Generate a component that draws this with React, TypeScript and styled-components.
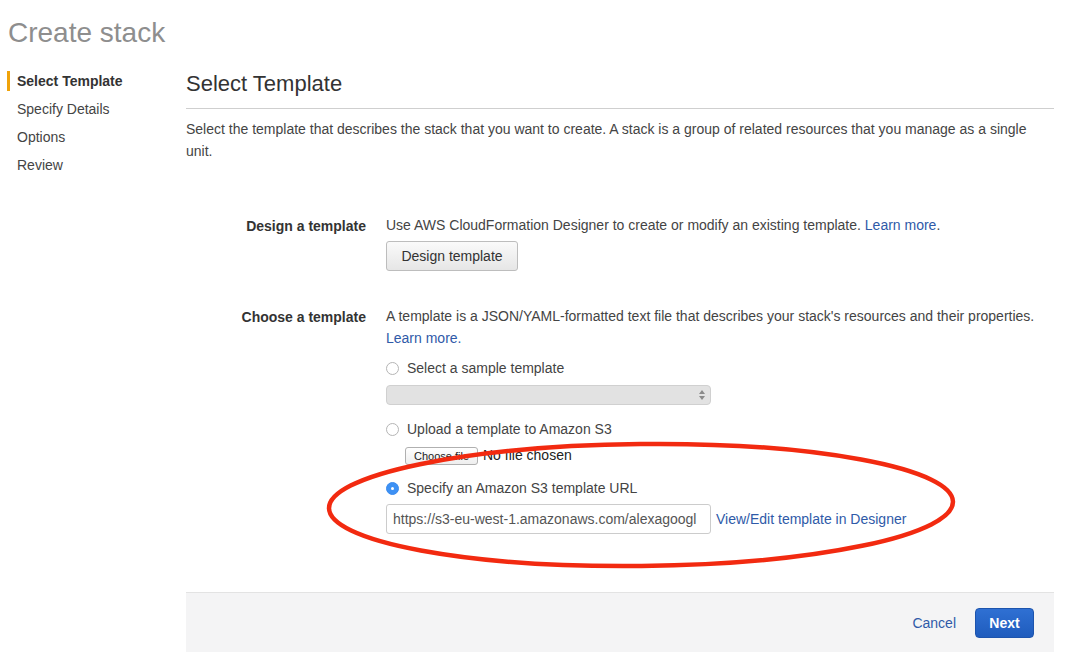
import React from "react";
import styled, { createGlobalStyle } from "styled-components";

const GlobalStyle = createGlobalStyle`
  html, body { margin: 0; padding: 0; background: #ffffff; }
  body { font-family: "Liberation Sans", Arial, Helvetica, sans-serif; color: #444; font-size: 14px; }
  * { box-sizing: border-box; }
`;

const Page = styled.div`
  position: relative;
  width: 1069px;
  height: 658px;
  overflow: hidden;
`;

const PageTitle = styled.h1`
  margin: 0;
  padding: 16px 0 0 8px;
  font-size: 28px;
  line-height: 34px;
  font-weight: 400;
  color: #8e8e8e;
`;

const Layout = styled.div`
  display: grid;
  grid-template-columns: 186px 868px;
`;

const Nav = styled.nav`
  display: flex;
  flex-direction: column;
  gap: 8px;
  padding: 21px 0 0 7px;
`;

const NavItem = styled.div<{ $active?: boolean }>`
  border-left: 3px solid ${(p) => (p.$active ? "#f0a30a" : "transparent")};
  padding-left: 7px;
  line-height: 20px;
  font-size: 14px;
  font-weight: ${(p) => (p.$active ? 700 : 400)};
  color: ${(p) => (p.$active ? "#333" : "#444")};
`;

const Main = styled.main`
  display: flex;
  flex-direction: column;
`;

const Heading = styled.h2`
  margin: 20px 0 0;
  padding-bottom: 10px;
  border-bottom: 1px solid #cfcfcf;
  font-size: 22px;
  line-height: 28px;
  font-weight: 400;
  color: #333;
`;

const Description = styled.p`
  margin: 9px 0 0;
  line-height: 22px;
  color: #444;
`;

const FormRow = styled.div<{ $top: number }>`
  display: grid;
  grid-template-columns: 180px 1fr;
  column-gap: 20px;
  margin-top: ${(p) => p.$top}px;
`;

const Label = styled.div`
  text-align: right;
  font-weight: 700;
  color: #333;
  line-height: 22px;
  padding-top: 1px;
`;

const Field = styled.div`
  display: flex;
  flex-direction: column;
  align-items: flex-start;
`;

const Text = styled.div`
  line-height: 22px;
  color: #444;
`;

const Link = styled.a`
  color: #2f5aa8;
  text-decoration: none;
`;

const Button = styled.button`
  margin-top: 5px;
  height: 30px;
  width: 132px;
  font-family: inherit;
  font-size: 14px;
  color: #333;
  background: linear-gradient(#fafafa, #e6e6e6);
  border: 1px solid #bdbdbd;
  border-radius: 3px;
`;

const RadioRow = styled.label<{ $top: number }>`
  display: flex;
  align-items: center;
  gap: 8px;
  margin-top: ${(p) => p.$top}px;
  line-height: 22px;
  color: #444;
`;

const RadioDot = styled.span<{ $checked?: boolean }>`
  width: 13px;
  height: 13px;
  border-radius: 50%;
  flex: none;
  position: relative;
  border: 1px solid ${(p) => (p.$checked ? "#3a8bef" : "#b5b5b5")};
  background: ${(p) => (p.$checked ? "#3d91f4" : "#fff")};
  &::after {
    content: "";
    display: ${(p) => (p.$checked ? "block" : "none")};
    position: absolute;
    left: 4px;
    top: 4px;
    width: 3px;
    height: 3px;
    border-radius: 50%;
    background: #fff;
  }
`;

const SelectBox = styled.div`
  margin-top: 6px;
  width: 325px;
  height: 20px;
  border: 1px solid #d0d0d0;
  border-radius: 4px;
  background: #e2e2e2;
  display: flex;
  justify-content: flex-end;
  align-items: center;
  padding-right: 4px;
`;

const FileRow = styled.div`
  margin-top: 7px;
  margin-left: 19px;
  display: flex;
  align-items: center;
  gap: 5px;
  height: 18px;
`;

const FileButton = styled.button`
  height: 18px;
  width: 73px;
  padding: 0;
  font-family: inherit;
  font-size: 11px;
  color: #222;
  background: linear-gradient(#ffffff, #eeeeee);
  border: 1px solid #b0b0b0;
  border-radius: 3px;
`;

const FileText = styled.span`
  font-size: 14px;
  color: #222;
  line-height: 18px;
  margin-top: -2px;
`;

const UrlRow = styled.div`
  margin-top: 5px;
  display: flex;
  align-items: center;
  gap: 5px;
`;

const UrlInput = styled.div`
  width: 325px;
  height: 30px;
  border: 1px solid #cccccc;
  border-radius: 3px;
  padding: 0 4px 0 6px;
  display: flex;
  align-items: center;
  overflow: hidden;
  white-space: nowrap;
  color: #555;
  font-size: 14px;
`;

const Footer = styled.div`
  margin-top: 58px;
  height: 60px;
  background: #f4f4f5;
  border-top: 1px solid #e3e3e3;
  display: flex;
  justify-content: flex-end;
  align-items: center;
  padding-right: 20px;
  gap: 19px;
`;

const CancelLink = styled.a`
  color: #2f5aa8;
  font-size: 14px;
  text-decoration: none;
`;

const PrimaryButton = styled.button`
  width: 59px;
  height: 30px;
  border-radius: 4px;
  border: 1px solid #1d54ad;
  background: linear-gradient(#2f70d3, #1f5cbd);
  color: #fff;
  font-family: inherit;
  font-weight: 700;
  font-size: 14px;
`;

const Annotation = styled.svg`
  position: absolute;
  left: 0;
  top: 0;
  pointer-events: none;
`;

export default function App() {
  return (
    <Page>
      <GlobalStyle />
      <PageTitle>Create stack</PageTitle>
      <Layout>
        <Nav>
          <NavItem $active>Select Template</NavItem>
          <NavItem>Specify Details</NavItem>
          <NavItem>Options</NavItem>
          <NavItem>Review</NavItem>
        </Nav>
        <Main>
          <Heading>Select Template</Heading>
          <Description>
            Select the template that describes the stack that you want to create. A stack is a group of related
            resources that you manage as a single unit.
          </Description>

          <FormRow $top={52}>
            <Label>Design a template</Label>
            <Field>
              <Text>
                Use AWS CloudFormation Designer to create or modify an existing template.{" "}
                <Link href="#">Learn more</Link>.
              </Text>
              <Button>Design template</Button>
            </Field>
          </FormRow>

          <FormRow $top={34}>
            <Label>Choose a template</Label>
            <Field>
              <Text>
                A template is a JSON/YAML-formatted text file that describes your stack's resources and their properties.
                <br />
                <Link href="#">Learn more.</Link>
              </Text>
              <RadioRow $top={8}>
                <RadioDot />
                Select a sample template
              </RadioRow>
              <SelectBox>
                <svg width="8" height="12" viewBox="0 0 8 12">
                  <path d="M4 1 L7 5 L1 5 Z" fill="#8a8a8a" />
                  <path d="M4 11 L7 7 L1 7 Z" fill="#8a8a8a" />
                </svg>
              </SelectBox>
              <RadioRow $top={13}>
                <RadioDot />
                Upload a template to Amazon S3
              </RadioRow>
              <FileRow>
                <FileButton>Choose file</FileButton>
                <FileText>No file chosen</FileText>
              </FileRow>
              <RadioRow $top={12}>
                <RadioDot $checked />
                Specify an Amazon S3 template URL
              </RadioRow>
              <UrlRow>
                <UrlInput>https://s3-eu-west-1.amazonaws.com/alexagoogl</UrlInput>
                <Link href="#">View/Edit template in Designer</Link>
              </UrlRow>
            </Field>
          </FormRow>

          <Footer>
            <CancelLink href="#">Cancel</CancelLink>
            <PrimaryButton>Next</PrimaryButton>
          </Footer>
        </Main>
      </Layout>
      <Annotation width="1069" height="658" viewBox="0 0 1069 658">
        <ellipse
          cx="641"
          cy="505"
          rx="312"
          ry="61"
          fill="none"
          stroke="#f22a10"
          strokeWidth="4.5"
          transform="rotate(-0.6 641 505)"
        />
      </Annotation>
    </Page>
  );
}
